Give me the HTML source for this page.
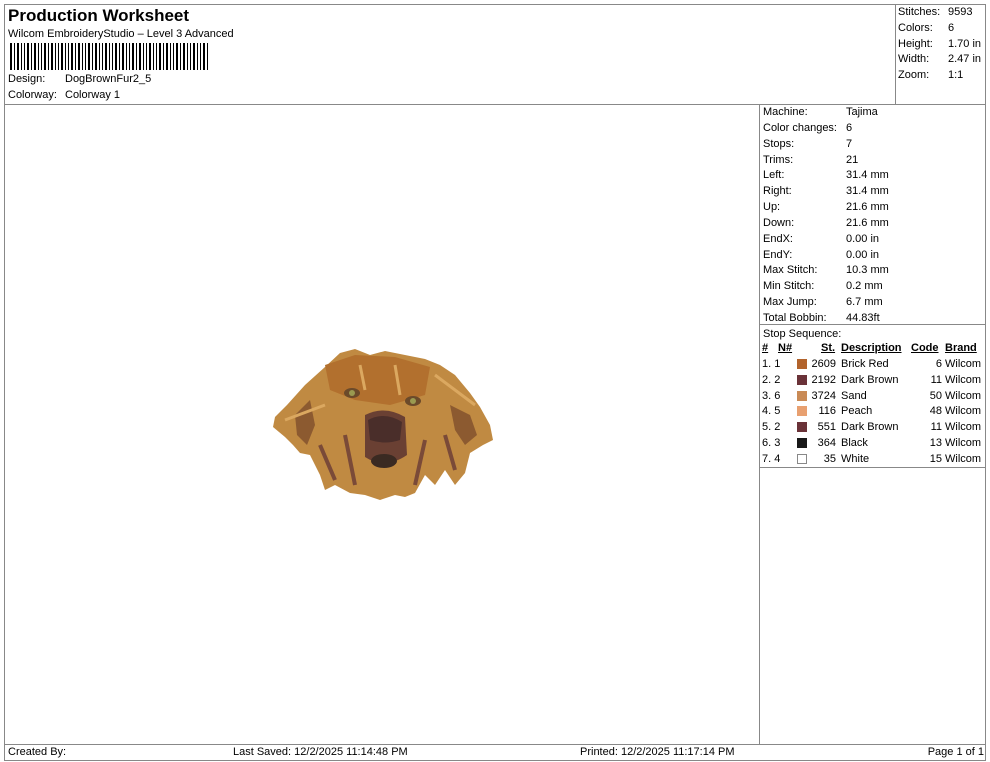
<!DOCTYPE html>
<html><head><meta charset="utf-8"><style>
*{margin:0;padding:0;box-sizing:border-box}
body{width:990px;height:762px;background:#fff;font-family:"Liberation Sans",Arial,sans-serif;font-size:11px;color:#000;position:relative;overflow:hidden}
.a{position:absolute;white-space:nowrap}
.l{position:absolute;background:#888}
.sw{display:block;width:10px;height:10px;position:absolute;top:1px;left:35px}
.u span{text-decoration:underline}
</style></head><body>
<div class="l" style="left:4px;top:4px;width:982px;height:1px"></div>
<div class="l" style="left:4px;top:4px;width:1px;height:757px"></div>
<div class="l" style="left:985px;top:4px;width:1px;height:757px"></div>
<div class="l" style="left:4px;top:104px;width:982px;height:1px"></div>
<div class="l" style="left:895px;top:4px;width:1px;height:100px"></div>
<div class="l" style="left:759px;top:104px;width:1px;height:640px"></div>
<div class="l" style="left:759px;top:324px;width:227px;height:1px"></div>
<div class="l" style="left:759px;top:467px;width:227px;height:1px"></div>
<div class="l" style="left:4px;top:744px;width:982px;height:1px"></div>
<div class="l" style="left:4px;top:760px;width:982px;height:1px"></div>

<div class="a" style="left:8px;top:6px;font-size:17px;font-weight:bold">Production Worksheet</div>
<div class="a" style="left:8px;top:28px">Wilcom EmbroideryStudio – Level 3 Advanced</div>
<svg class="a" style="left:10px;top:43px" width="200" height="27">
<g fill="#000">
<rect x="0" y="0" width="2" height="27"/><rect x="4" y="0" width="1" height="27"/><rect x="7" y="0" width="2" height="27"/><rect x="11" y="0" width="1" height="27"/><rect x="14" y="0" width="1" height="27"/><rect x="17" y="0" width="2" height="27"/><rect x="21" y="0" width="1" height="27"/><rect x="24" y="0" width="2" height="27"/><rect x="28" y="0" width="1" height="27"/><rect x="31" y="0" width="1" height="27"/><rect x="34" y="0" width="2" height="27"/><rect x="38" y="0" width="1" height="27"/><rect x="41" y="0" width="2" height="27"/><rect x="45" y="0" width="1" height="27"/><rect x="48" y="0" width="1" height="27"/><rect x="51" y="0" width="2" height="27"/><rect x="55" y="0" width="1" height="27"/><rect x="58" y="0" width="1" height="27"/><rect x="61" y="0" width="2" height="27"/><rect x="65" y="0" width="1" height="27"/><rect x="68" y="0" width="2" height="27"/><rect x="72" y="0" width="1" height="27"/><rect x="75" y="0" width="1" height="27"/><rect x="78" y="0" width="2" height="27"/><rect x="82" y="0" width="1" height="27"/><rect x="85" y="0" width="2" height="27"/><rect x="89" y="0" width="1" height="27"/><rect x="92" y="0" width="1" height="27"/><rect x="95" y="0" width="2" height="27"/><rect x="99" y="0" width="1" height="27"/><rect x="102" y="0" width="1" height="27"/><rect x="105" y="0" width="2" height="27"/><rect x="109" y="0" width="1" height="27"/><rect x="112" y="0" width="2" height="27"/><rect x="116" y="0" width="1" height="27"/><rect x="119" y="0" width="1" height="27"/><rect x="122" y="0" width="2" height="27"/><rect x="126" y="0" width="1" height="27"/><rect x="129" y="0" width="2" height="27"/><rect x="133" y="0" width="1" height="27"/><rect x="136" y="0" width="1" height="27"/><rect x="139" y="0" width="2" height="27"/><rect x="143" y="0" width="1" height="27"/><rect x="146" y="0" width="1" height="27"/><rect x="149" y="0" width="2" height="27"/><rect x="153" y="0" width="1" height="27"/><rect x="156" y="0" width="2" height="27"/><rect x="160" y="0" width="1" height="27"/><rect x="163" y="0" width="1" height="27"/><rect x="166" y="0" width="2" height="27"/><rect x="170" y="0" width="1" height="27"/><rect x="173" y="0" width="2" height="27"/><rect x="177" y="0" width="1" height="27"/><rect x="180" y="0" width="1" height="27"/><rect x="183" y="0" width="2" height="27"/><rect x="187" y="0" width="1" height="27"/><rect x="190" y="0" width="1" height="27"/><rect x="193" y="0" width="2" height="27"/><rect x="197" y="0" width="1" height="27"/>
</g></svg>
<div class="a" style="left:8px;top:73px">Design:</div><div class="a" style="left:65px;top:73px">DogBrownFur2_5</div>
<div class="a" style="left:8px;top:89px">Colorway:</div><div class="a" style="left:65px;top:89px">Colorway 1</div>

<div class="a" style="left:898px;top:5px;line-height:15.8px">Stitches:<br>Colors:<br>Height:<br>Width:<br>Zoom:</div>
<div class="a" style="left:948px;top:5px;line-height:15.8px">9593<br>6<br>1.70 in<br>2.47 in<br>1:1</div>

<div class="a" style="left:763px;top:105px;line-height:15.85px">Machine:<br>Color changes:<br>Stops:<br>Trims:<br>Left:<br>Right:<br>Up:<br>Down:<br>EndX:<br>EndY:<br>Max Stitch:<br>Min Stitch:<br>Max Jump:<br>Total Bobbin:<br>Stop Sequence:</div>
<div class="a" style="left:846px;top:105px;line-height:15.85px">Tajima<br>6<br>7<br>21<br>31.4 mm<br>31.4 mm<br>21.6 mm<br>21.6 mm<br>0.00 in<br>0.00 in<br>10.3 mm<br>0.2 mm<br>6.7 mm<br>44.83ft</div>

<div class="a u" style="left:762px;top:342px;width:224px;font-weight:bold">
<span class="a" style="left:0">#</span><span class="a" style="left:16px">N#</span><span class="a" style="left:59px">St.</span><span class="a" style="left:79px">Description</span><span class="a" style="left:149px">Code</span><span class="a" style="left:183px">Brand</span></div>
<div class="a" style="left:762px;top:358px;width:224px">
<div style="position:relative;height:15.8px"><span class="a">1. 1</span><span class="sw" style="background:#b2632c"></span><span class="a" style="right:150px">2609</span><span class="a" style="left:79px">Brick Red</span><span class="a" style="right:44px">6</span><span class="a" style="left:183px">Wilcom</span></div>
<div style="position:relative;height:15.8px"><span class="a">2. 2</span><span class="sw" style="background:#6a3238"></span><span class="a" style="right:150px">2192</span><span class="a" style="left:79px">Dark Brown</span><span class="a" style="right:44px">11</span><span class="a" style="left:183px">Wilcom</span></div>
<div style="position:relative;height:15.8px"><span class="a">3. 6</span><span class="sw" style="background:#c98a55"></span><span class="a" style="right:150px">3724</span><span class="a" style="left:79px">Sand</span><span class="a" style="right:44px">50</span><span class="a" style="left:183px">Wilcom</span></div>
<div style="position:relative;height:15.8px"><span class="a">4. 5</span><span class="sw" style="background:#e8a070"></span><span class="a" style="right:150px">116</span><span class="a" style="left:79px">Peach</span><span class="a" style="right:44px">48</span><span class="a" style="left:183px">Wilcom</span></div>
<div style="position:relative;height:15.8px"><span class="a">5. 2</span><span class="sw" style="background:#6a3238"></span><span class="a" style="right:150px">551</span><span class="a" style="left:79px">Dark Brown</span><span class="a" style="right:44px">11</span><span class="a" style="left:183px">Wilcom</span></div>
<div style="position:relative;height:15.8px"><span class="a">6. 3</span><span class="sw" style="background:#181818"></span><span class="a" style="right:150px">364</span><span class="a" style="left:79px">Black</span><span class="a" style="right:44px">13</span><span class="a" style="left:183px">Wilcom</span></div>
<div style="position:relative;height:15.8px"><span class="a">7. 4</span><span class="sw" style="background:#fff;border:1px solid #888"></span><span class="a" style="right:150px">35</span><span class="a" style="left:79px">White</span><span class="a" style="right:44px">15</span><span class="a" style="left:183px">Wilcom</span></div>
</div>

<svg class="a" style="left:265px;top:345px" width="235" height="160" viewBox="0 0 235 160">
<path d="M10 72 L22 60 L40 40 L60 22 L75 8 L90 4 L105 10 L120 6 L140 10 L160 14 L175 20 L190 30 L205 48 L215 62 L225 80 L228 95 L218 100 L205 108 L200 128 L190 140 L180 125 L170 140 L160 130 L150 148 L140 152 L130 150 L115 155 L100 150 L85 148 L70 140 L60 145 L55 130 L45 110 L35 108 L28 100 L20 92 L8 82 Z" fill="#c08a42"/>
<path d="M30 70 L45 55 L50 80 L42 100 L32 90 Z" fill="#8c5a30"/>
<path d="M185 60 L205 70 L212 90 L200 100 L190 85 Z" fill="#8c5a30"/>
<path d="M60 20 L90 10 L130 12 L165 22 L160 50 L125 60 L90 55 L65 45 Z" fill="#b2702e"/>
<path d="M100 70 Q120 60 140 72 L142 110 Q120 125 100 112 Z" fill="#6a4033"/>
<path d="M103 75 Q120 66 137 77 L135 95 Q120 100 105 95 Z" fill="#4a2e2a"/>
<ellipse cx="119" cy="116" rx="13" ry="7" fill="#3a2a22"/>
<ellipse cx="87" cy="48" rx="8" ry="5" fill="#6b4a2a"/><circle cx="87" cy="48" r="3" fill="#9a9a50"/>
<ellipse cx="148" cy="56" rx="8" ry="5" fill="#6b4a2a"/><circle cx="148" cy="56" r="3" fill="#9a9a50"/>
<path d="M55 100 L70 135 M160 95 L150 140 M180 90 L190 125 M80 90 L90 140" stroke="#7a4a38" stroke-width="4" fill="none"/>
<path d="M20 75 L60 60 M170 30 L210 60 M95 20 L100 45 M130 20 L135 50" stroke="#dba860" stroke-width="3" fill="none"/>
</svg>

<div class="a" style="left:8px;top:746px">Created By:</div>
<div class="a" style="left:233px;top:746px">Last Saved: 12/2/2025 11:14:48 PM</div>
<div class="a" style="left:580px;top:746px">Printed: 12/2/2025 11:17:14 PM</div>
<div class="a" style="right:6px;top:746px">Page 1 of 1</div>
</body></html>
